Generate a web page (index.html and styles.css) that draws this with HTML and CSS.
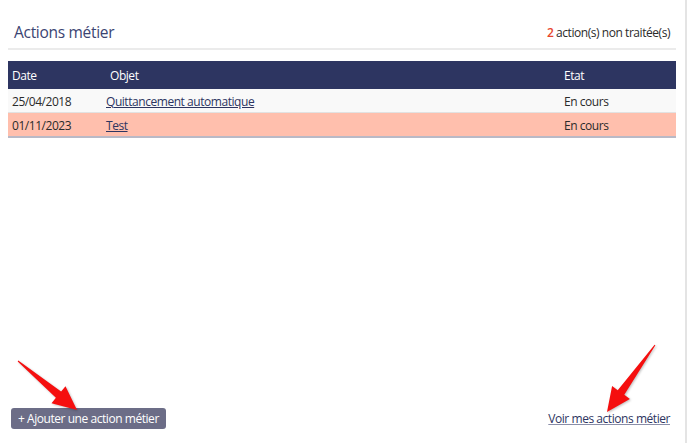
FILE: index.html
```html
<!DOCTYPE html>
<html lang="fr">
<head>
  <meta charset="UTF-8" />
  <meta name="viewport" content="width=device-width, initial-scale=1.0" />
  <title>Actions métier</title>
  <link rel="stylesheet" href="styles.css">
</head>
<body>
  <div class="panel">
    <div class="panel-header">
      <h2>Actions métier</h2>
      <span class="counter"><b>2</b> action(s) non traitée(s)</span>
    </div>

    <table class="actions">
      <thead>
        <tr>
          <th class="col-date">Date</th>
          <th class="col-objet">Objet</th>
          <th class="col-etat">Etat</th>
        </tr>
      </thead>
      <tbody>
        <tr>
          <td>25/04/2018</td>
          <td><a href="#">Quittancement automatique</a></td>
          <td>En cours</td>
        </tr>
        <tr class="late">
          <td>01/11/2023</td>
          <td><a href="#">Test</a></td>
          <td>En cours</td>
        </tr>
      </tbody>
    </table>

    <div class="panel-footer">
      <button class="btn-add">+ Ajouter une action métier</button>
      <a href="#" class="see-all">Voir mes actions métier</a>
    </div>
  </div>

  <!-- annotation arrows -->
  <svg class="arrows" viewBox="0 0 688 443" width="688" height="443">
    <polygon points="17.7,361.4 55.9,397.8 51.5,403.2 77,410 65.5,386.2 61.1,391.6 18.3,360.6"></polygon>
    <polygon points="654.6,344.7 617.7,390.2 612.1,386.1 607,412 629.9,398.9 624.3,394.8 655.4,345.3"></polygon>
  </svg>
</body>
</html>
```

FILE: styles.css
```css
:root {
  --navy: #2d3561;
  --title-color: #3b4472;
  --text-color: #2b2b2b;
  --late-bg: #ffbfad;
  --line-color: #ebebeb;
}

body {
  margin: 0;
  font-family: 'Open Sans', 'Noto Sans', sans-serif;
  font-size: 12px;
  letter-spacing: -0.45px;
  color: var(--text-color);
  background: #fff;
}

.panel {
  width: 668px;
  height: 443px;
  padding: 0 9px 0 8px;
  border-right: 2px solid #e4e4e4;
  display: flex;
  flex-direction: column;
}

.panel-header {
  display: flex;
  align-items: center;
  justify-content: space-between;
  height: 32px;
  padding: 16px 6px 0 6px;
  border-bottom: 2px solid var(--line-color);
}

.panel-header h2 {
  margin: 0;
  font-size: 15.5px;
  font-weight: normal;
  letter-spacing: -0.3px;
  color: var(--title-color);
}

.counter b {
  font-weight: 600;
  color: #e8452c;
}

.actions {
  margin-top: 11px;
  width: 100%;
  border-collapse: collapse;
}

.actions th {
  background-color: var(--navy);
  color: #fff;
  font-weight: normal;
  text-align: left;
  height: 28px;
  padding: 0 4px;
}

.actions th.col-objet {
  padding-left: 8px;
}

.col-date { width: 86px; }
.col-etat { width: 108px; }

.actions td {
  height: 22px;
  padding: 1px 4px 0 4px;
  background: #f9f9f9;
  border-bottom: 1px solid #e2e2e2;
}

.actions tr.late td {
  background: var(--late-bg);
  border-bottom: 2px solid #b9b9c6;
}

.actions a {
  color: var(--navy);
}

.panel-footer {
  margin-top: auto;
  display: flex;
  align-items: center;
  justify-content: space-between;
  padding: 0 6px 14px 3px;
}

.btn-add {
  font-family: inherit;
  font-size: 12px;
  letter-spacing: -0.45px;
  color: #fff;
  background-color: #6c6d87;
  border: none;
  border-radius: 3px;
  height: 21px;
  padding: 0 7px;
}

.see-all {
  color: var(--navy);
  text-decoration-color: #8a8ea8;
}

.arrows {
  position: absolute;
  top: 0;
  left: 0;
  pointer-events: none;
}

.arrows polygon {
  fill: #f50f0f;
  filter: drop-shadow(1px 1px 1px rgba(0, 0, 0, 0.25));
}
```
